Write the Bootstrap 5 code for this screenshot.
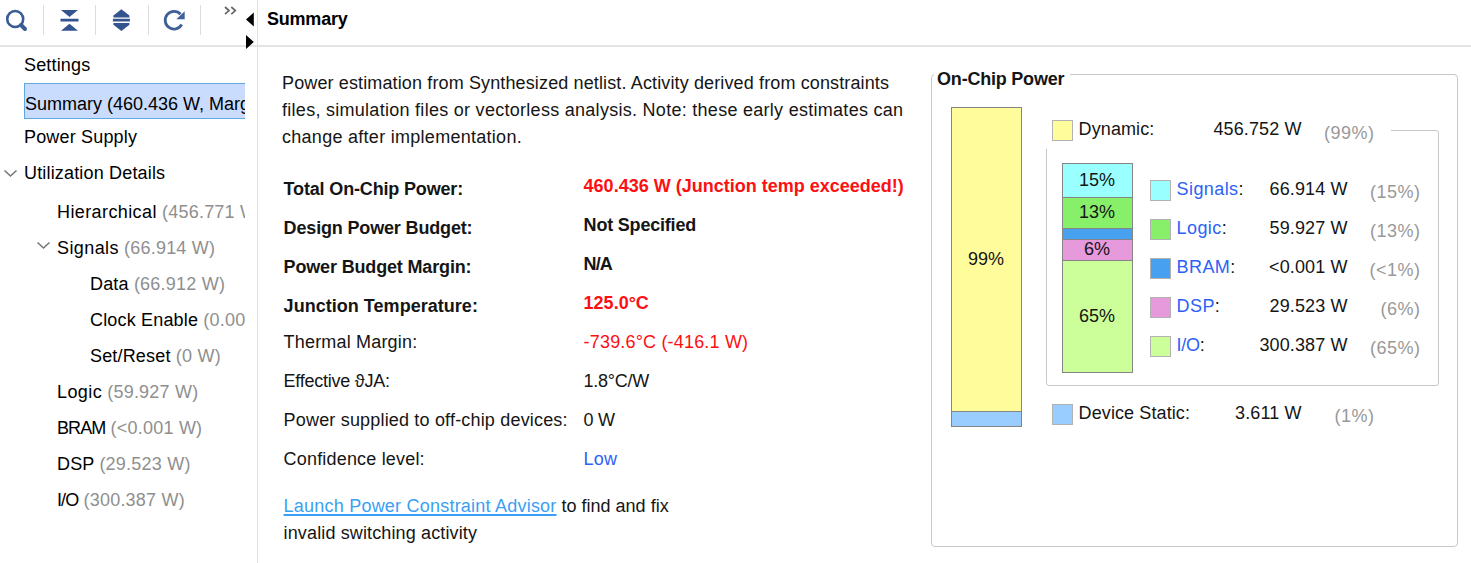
<!DOCTYPE html>
<html lang="en">
<head>
<meta charset="utf-8">
<meta name="viewport" content="width=device-width, initial-scale=1">
<title>Power Summary</title>
<link href="https://cdn.jsdelivr.net/npm/bootstrap@5.3.0/dist/css/bootstrap.min.css" rel="stylesheet">
<style>
  body { font: 18px/27px "Liberation Sans", Arial, sans-serif; color: #151515; background: #fff; height: 563px; overflow: hidden; white-space: nowrap; }
  .side { width: 258px; border-right: 1px solid #e2e2e2; }
  .bar-top { height: 47px; border-bottom: 2px solid #e4e4e4; }
  .tool { width: 52.6px; height: 30px; margin-top: 5px; border-right: 1.5px solid #dcdcdc; }
  .tool:first-child { width: 43.5px; }
  .splitter { left: 245px; top: 12px; }
  .tree { width: 245px; color: #000; }
  .node { height: 36px; line-height: 36px; padding-left: 24px; letter-spacing: .17px; }
  .node.lvl1 { padding-left: 57px; }
  .node.lvl2 { padding-left: 90px; }
  .node.drop { height: 39px; padding-top: 3px; }
  .node.picked { line-height: 40px; padding: 0; margin-left: 24px; background: #cadcfd; border: solid #5fa8e0; border-width: 1px 0 1px 1px; letter-spacing: 0; }
  .node .dim { color: #8f8f8f; letter-spacing: .22px; }
  .twist { left: 3px; top: 13px; }
  .lvl1 .twist { left: 36px; top: 10px; }
  .pane-title { padding: 6px 0 0 9px; color: #000; letter-spacing: -.22px; }
  .info { width: 672.6px; padding: 22.5px 0 0 24px; }
  .intro { margin-bottom: 16.5px; }
  .ls-a { letter-spacing: .13px; }
  .ls-b { letter-spacing: .28px; }
  .loose { letter-spacing: .4px; }
  .tight { letter-spacing: -.25px; }
  .tighter { letter-spacing: -.9px; }
  .item { height: 39px; line-height: 39px; padding-left: 1.6px; letter-spacing: .18px; }
  .item .name { width: 300px; }
  .item.strong .name { padding-top: 3px; letter-spacing: -.16px; }
  .item.strong .name.even { letter-spacing: .03px; }
  .item.strong .val { letter-spacing: 0; }
  .item.strong .val.tight { letter-spacing: -.2px; }
  .item.strong .val.tighter { letter-spacing: -.9px; }
  .alert-red { color: #fe0f12; }
  .blue { color: #2c62f6; }
  .advice { margin-top: 13.5px; padding-left: 1.6px; }
  .advice a { color: #3a9ff5; text-underline-offset: 2px; text-decoration-thickness: 1.5px; letter-spacing: .22px; }
  .chip { width: 527.4px; height: 473px; margin-top: 27px; border: 1.5px solid #c8c8c8; border-radius: 4px; padding-left: 19px; }
  .chip-title { width: 136px; height: 27px; margin: -9.5px 0 0 -16.5px; padding-left: 3px; background: #fff; letter-spacing: -.22px; }
  .stack { width: 71px; border: 1px solid #858585; color: #151515; }
  .stack > div { display: flex; align-items: center; justify-content: center; border-top: 1px solid #858585; }
  .stack > div:first-child { border-top: 0; }
  .total { height: 320px; margin-top: 14px; }
  .detail { height: 210px; margin: 14px 0 0 15px; }
  .groups { width: 393px; margin: 19px 0 0 24px; }
  .group-head { width: 345px; height: 37px; margin-bottom: -19px; padding-left: 6px; background: #fff; z-index: 1; }
  .inner { height: 256px; border: 1.5px solid #c8c8c8; border-radius: 3px; padding-top: 18px; }
  .sw { width: 21px; height: 21px; border: 1.5px solid #b2b2b2; flex: none; }
  .sum-name { width: 139px; padding-left: 6px; letter-spacing: .1px; }
  .sum-val { width: 90px; text-align: right; letter-spacing: .12px; }
  .pct { color: #999; letter-spacing: .5px; text-align: right; padding-top: 3px; width: 73px; }
  .legend-list { margin: 31px 0 0 17px; }
  .leg { height: 39px; }
  .leg .sum-name, .leg .sum-val, .leg .pct, .static-row .sum-name, .static-row .sum-val, .static-row .pct { margin-top: -4px; }
  .leg .sum-name { width: 88px; letter-spacing: .4px; }
  .leg .sum-val { width: 89px; }
  .static-row { padding: 18px 0 0 6px; }
  .c-dyn { background: #fffd9b; } .c-sta { background: #99ccff; }
  .c-sig { background: #99ffff; } .c-log { background: #87ef69; }
  .c-brm { background: #47a0f0; } .c-dsp { background: #e699db; } .c-io { background: #ccff99; }
</style>
</head>
<body class="d-flex">
<aside class="side flex-shrink-0 position-relative">
  <div class="bar-top d-flex">
    <div class="tool"><svg width="43" height="30" viewBox="0 5 43 30" fill="none" stroke="#3b5b93"><circle cx="15.2" cy="19" r="8" stroke-width="2.6"/><path d="M21 25l4 4" stroke-width="4" stroke-linecap="round"/></svg></div>
    <div class="tool"><svg width="51" height="30" viewBox="43.5 5 51 30" fill="#33548f"><path d="M60.500 10h17L69 17zM60 18.700h18v2.800H60zM60.500 30.700h17L69 23.700z"/></svg></div>
    <div class="tool"><svg width="51" height="30" viewBox="96.1 5 51 30" fill="#33548f"><path d="M121.500 9.300l8 6.200v1.900h-16v-1.900zM113 18.800h17v2.600h-17zM121.500 31l8-6.200v-1.900h-16v1.900z"/></svg></div>
    <div class="tool"><svg width="51" height="30" viewBox="148.7 5 51 30"><path d="M180.200 14.300A8.800 8.800 0 1 0 181.400 24.500" fill="none" stroke="#3f5f97" stroke-width="2.8"/><path d="M184.400 11.300v7.900h-8.300z" fill="#3f5f97"/></svg></div>
    <svg width="36" height="30" viewBox="201.5 0 36 30" fill="none" stroke="#666" stroke-width="1.7"><path d="M225.500 7l4 3.600-4 3.600M231.800 7l4 3.600-4 3.600"/></svg>
  </div>
  <svg class="splitter position-absolute" width="10" height="38" viewBox="245 12 10 38"><path d="M253.800 12.500v14l-7.800-7zM246 35v14l7.800-7z"/></svg>
  <nav class="tree overflow-hidden">
    <div class="node">Settings</div>
    <div class="node picked overflow-hidden">Summary (460.436 W, Margin: N/A)</div>
    <div class="node">Power Supply</div>
    <div class="node position-relative"><svg class="twist position-absolute" width="15" height="12" fill="none" stroke="#777" stroke-width="1.6"><path d="M1.500 2.500l6 5.500 6-5.500"/></svg>Utilization Details</div>
    <div class="node lvl1 drop"><span class="loose">Hierarchical</span> <span class="dim">(456.771 W)</span></div>
    <div class="node lvl1 position-relative"><svg class="twist position-absolute" width="15" height="12" fill="none" stroke="#777" stroke-width="1.6"><path d="M1.500 2.500l6 5.500 6-5.500"/></svg><span class="loose">Signals</span> <span class="dim">(66.914 W)</span></div>
    <div class="node lvl2">Data <span class="dim">(66.912 W)</span></div>
    <div class="node lvl2">Clock Enable <span class="dim">(0.000 W)</span></div>
    <div class="node lvl2">Set/Reset <span class="dim">(0 W)</span></div>
    <div class="node lvl1"><span class="loose">Logic</span> <span class="dim">(59.927 W)</span></div>
    <div class="node lvl1"><span class="tighter">BRAM</span> <span class="dim">(&lt;0.001 W)</span></div>
    <div class="node lvl1">DSP <span class="dim">(29.523 W)</span></div>
    <div class="node lvl1"><span class="tighter">I/O</span> <span class="dim">(300.387 W)</span></div>
  </nav>
</aside>
<main class="flex-grow-1">
  <header class="bar-top pane-title fw-bold">Summary</header>
  <div class="d-flex">
    <section class="info flex-shrink-0">
      <div class="intro">
        <div class="ls-a">Power estimation from Synthesized netlist. Activity derived from constraints</div>
        <div class="ls-b">files, simulation files or vectorless analysis. Note: these early estimates can</div>
        <div class="ls-b">change after implementation.</div>
      </div>
      <div class="item strong d-flex fw-bold"><div class="name">Total On-Chip Power:</div><div class="val alert-red">460.436 W (Junction temp exceeded!)</div></div>
      <div class="item strong d-flex fw-bold"><div class="name">Design Power Budget:</div><div class="val tight">Not Specified</div></div>
      <div class="item strong d-flex fw-bold"><div class="name">Power Budget Margin:</div><div class="val tighter">N/A</div></div>
      <div class="item strong d-flex fw-bold"><div class="name even">Junction Temperature:</div><div class="val alert-red">125.0°C</div></div>
      <div class="item d-flex"><div class="name">Thermal Margin:</div><div class="alert-red">-739.6°C (-416.1 W)</div></div>
      <div class="item d-flex"><div class="name tight">Effective ϑJA:</div><div class="tight">1.8°C/W</div></div>
      <div class="item d-flex"><div class="name">Power supplied to off-chip devices:</div><div class="tight">0 W</div></div>
      <div class="item d-flex"><div class="name">Confidence level:</div><div class="blue">Low</div></div>
      <div class="advice"><a href="#">Launch Power Constraint Advisor</a> to find and fix<br><span class="ls-a">invalid switching activity</span></div>
    </section>
    <section class="chip flex-shrink-0">
      <div class="chip-title fw-bold">On-Chip Power</div>
      <div class="d-flex">
        <div class="stack total d-flex flex-column"><div class="c-dyn flex-grow-1">99%</div><div class="c-sta" style="height:15px"></div></div>
        <div class="groups">
          <div class="group-head d-flex position-relative">
            <div class="sw c-dyn mt-2"></div><div class="sum-name pt-1">Dynamic:</div><div class="sum-val pt-1">456.752 W</div><div class="pct pt-2">(99%)</div>
          </div>
          <div class="inner d-flex">
            <div class="stack detail">
              <div class="c-sig" style="height:33px">15%</div><div class="c-log" style="height:31px">13%</div><div class="c-brm" style="height:11px"></div><div class="c-dsp" style="height:21px">6%</div><div class="c-io" style="height:112px">65%</div>
            </div>
            <div class="legend-list">
              <div class="leg d-flex"><div class="sw c-sig"></div><div class="sum-name"><span class="blue">Signals</span>:</div><div class="sum-val">66.914 W</div><div class="pct">(15%)</div></div>
              <div class="leg d-flex"><div class="sw c-log"></div><div class="sum-name"><span class="blue">Logic</span>:</div><div class="sum-val">59.927 W</div><div class="pct">(13%)</div></div>
              <div class="leg d-flex"><div class="sw c-brm"></div><div class="sum-name"><span class="blue">BRAM</span>:</div><div class="sum-val">&lt;0.001 W</div><div class="pct">(&lt;1%)</div></div>
              <div class="leg d-flex"><div class="sw c-dsp"></div><div class="sum-name"><span class="blue">DSP</span>:</div><div class="sum-val">29.523 W</div><div class="pct">(6%)</div></div>
              <div class="leg d-flex"><div class="sw c-io"></div><div class="sum-name"><span class="blue tight">I/O</span>:</div><div class="sum-val">300.387 W</div><div class="pct">(65%)</div></div>
            </div>
          </div>
          <div class="static-row d-flex"><div class="sw c-sta"></div><div class="sum-name">Device Static:</div><div class="sum-val">3.611 W</div><div class="pct">(1%)</div></div>
        </div>
      </div>
    </section>
  </div>
</main>
<script src="https://cdn.jsdelivr.net/npm/bootstrap@5.3.0/dist/js/bootstrap.bundle.min.js"></script>
</body>
</html>
